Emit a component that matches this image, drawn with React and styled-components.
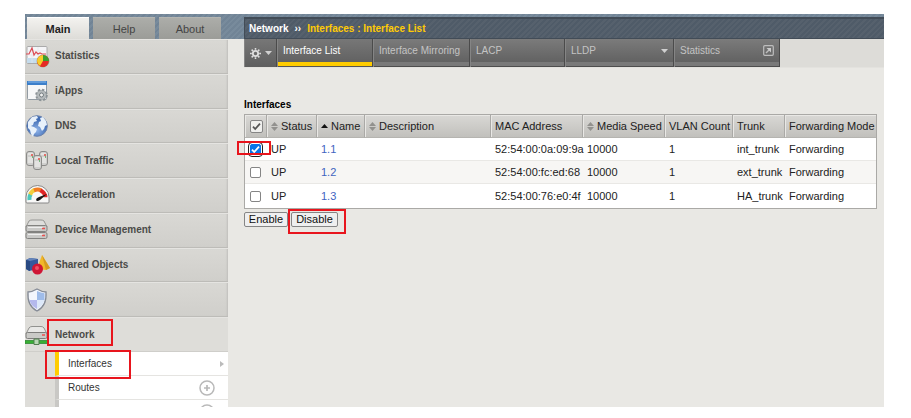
import React, { useState } from "react";
import styled, { createGlobalStyle, css } from "styled-components";

const GlobalStyle = createGlobalStyle`
  *, *::before, *::after { box-sizing: border-box; }
  body {
    margin: 0;
    background: #fff;
    color: #222;
    font: 11px/14px "Liberation Sans", Arial, sans-serif;
  }
  button, input { font: inherit; margin: 0; }
  a { color: inherit; text-decoration: none; }
  ul { list-style: none; margin: 0; padding: 0; }
`;

const callout = css`
  &::after {
    content: "";
    position: absolute;
    inset: ${(p) => p.$callout};
    border: 2px solid #e8151d;
    pointer-events: none;
    z-index: 2;
  }
`;

const Shell = styled.div`
  display: flex;
  flex-direction: column;
  height: calc(100vh - 25px);
  min-width: 800px;
  margin: 14px 27px 11px 25px;
  overflow: hidden;
  background: #e9e8e4;
`;

const Header = styled.header`
  display: flex;
  flex: none;
  height: 25px;
  padding-top: 3px;
  background: repeating-linear-gradient(135deg, #718496 0 2px, #788b9c 2px 4px);
`;

const Tabs = styled.nav`
  display: flex;
  gap: 4px;
  width: 219px;
  padding-left: 2px;
`;

const Tab = styled.button`
  width: 62px;
  padding: 0;
  border: 0;
  border-top: 1px solid ${(p) => (p.$active ? "#fff" : "#b5b6b2")};
  background: ${(p) =>
    p.$active ? "linear-gradient(#f3f2ef, #dddcd8)" : "linear-gradient(#acada9, #9b9c98)"};
  color: ${(p) => (p.$active ? "#222" : "#444")};
  font-weight: ${(p) => (p.$active ? 700 : 400)};
`;

const Breadcrumb = styled.h1`
  display: flex;
  flex: 1;
  align-items: center;
  gap: 6px;
  margin: 0;
  padding-left: 4px;
  border: 1px solid #424c57;
  border-width: 2px 0 1px 1px;
  background: repeating-linear-gradient(135deg, #4f5b68 0 2px, #56616d 2px 4px);
  color: #fff;
  font-size: 10px;
  font-weight: 700;
`;

const Trail = styled.span`
  color: #ffcb05;
`;

const Body = styled.div`
  display: flex;
  flex: 1;
  min-height: 0;
`;

const Sidebar = styled.aside`
  width: 203px;
  flex: none;
  background: #deddd9;
`;

const Menu = styled.ul`
  display: grid;
  grid-template-rows: repeat(9, 1fr);
  height: 313px;
`;

const MenuItem = styled.li`
  display: flex;
  border-bottom: 1px solid ${(p) => (p.$open ? "#cfceca" : "#bdbcb8")};
  border-top: 1px solid #e5e4e1;
  background: ${(p) => (p.$open ? "#deddd9" : "linear-gradient(#d9d8d4, #d0cfcb)")};
  box-shadow: ${(p) => (p.$open ? "none" : "inset -2px 0 2px -1px #bfbebb")};
`;

const MenuLink = styled.a`
  display: flex;
  flex: 1;
  align-items: center;
  color: #4b4b48;
  font-size: 10px;
  font-weight: 700;
  svg { flex: none; width: 26px; height: 26px; margin-right: 4px; }
`;

const MenuLabel = styled.span`
  position: relative;
  ${(p) => p.$callout && callout}
`;

const Submenu = styled.ul`
  margin-left: 30px;
`;

const SubItem = styled.li`
  position: relative;
  display: flex;
  align-items: center;
  justify-content: space-between;
  height: 24px;
  padding: 0 13px 0 9px;
  border-left: 4px solid ${(p) => (p.$active ? "#fc0" : "#c9c8c5")};
  border-bottom: 1px solid #e5e4e1;
  background: #fff;
  color: #333;
  font-size: 10px;
  ${(p) => p.$active && "padding-right: 4px;"}
  ${(p) => p.$callout && callout}
`;

const IconButton = styled.button`
  display: flex;
  padding: 0;
  border: 0;
  background: none;
`;

const Main = styled.main`
  flex: 1;
  min-width: 0;
  margin-left: 16px;
`;

const Toolbar = styled.nav`
  display: flex;
  height: 29px;
  background: #dddcd8;
  border-bottom: 1px solid #e3e2de;
`;

const ToolTab = styled.button`
  display: flex;
  justify-content: space-between;
  align-items: center;
  width: ${(p) => p.$width};
  padding: 0 5px 5px;
  border: 0;
  border-right: 1px solid #4b4b4b;
  border-left: 1px solid #858585;
  background: linear-gradient(#7b7b7b, #626262 23px, #797979 23px 27px, #4d4d4d 27px);
  color: ${(p) => (p.$active ? "#fff" : "#c4c4c4")};
  font-size: 10px;
  text-align: left;
  white-space: nowrap;
  ${(p) => p.$active && "background: linear-gradient(#777, #626262 23px, #fc0 23px 27px, #555 27px);"}
  ${(p) => p.$tools && "background: linear-gradient(#777, #5e5e5e); padding-bottom: 0; padding-right: 4px;"}
`;

const Section = styled.section`
  padding: 30px 7px 0 0;
`;

const Heading = styled.h2`
  margin: 0 0 2px;
  color: #000;
  font-size: 10px;
  line-height: 14px;
  font-weight: 700;
`;

const Table = styled.table`
  width: 100%;
  table-layout: fixed;
  border-collapse: separate;
  border-spacing: 0;
  border: 1px solid #aaa9a6;
  background: #fff;
  white-space: nowrap;
`;

const Col = styled.col`
  width: ${(p) => p.$width};
`;

const Th = styled.th`
  height: 23px;
  padding: 0 0 0 4px;
  border-bottom: 1px solid #b5b4b0;
  border-right: 1px solid #aaa9a6;
  box-shadow: inset 1px 1px #e9e8e5;
  background: linear-gradient(#d9d8d5, #c1c0bc);
  font-weight: 400;
  text-align: left;
  &:last-child { border-right: 0; }
`;

const ThInner = styled.span`
  display: flex;
  align-items: center;
  gap: 3px;
`;

const Row = styled.tr`
  background: ${(p) => (p.$shaded ? "#f7f6f4" : "#fff")};
`;

const Td = styled.td`
  position: relative;
  height: ${(p) => (p.$last ? "24px" : "23px")};
  padding: 0 0 0 4px;
  border-bottom: ${(p) => (p.$last ? "0" : "1px solid #e9e8e5")};
  ${(p) => p.$callout && callout}
  & > a { color: #3f64bf; }
`;

const Check = styled.input.attrs({ type: "checkbox" })`
  appearance: none;
  display: block;
  width: ${(p) => (p.$all ? "13px" : "11px")};
  height: ${(p) => (p.$all ? "13px" : "11px")};
  margin-left: 1px;
  border: 1px solid #858585;
  border-radius: 2px;
  background: ${(p) => (p.$all ? "#efefed" : "#fff")} center / 11px 11px no-repeat;
  &:checked {
    background-image: url("data:image/svg+xml,%3Csvg xmlns='http://www.w3.org/2000/svg' viewBox='0 0 11 11'%3E%3Cpath d='M2 5.7l2.2 2.3L9 2.7' fill='none' stroke='${(p) =>
      p.$all ? "%23555" : "white"}' stroke-width='1.8'/%3E%3C/svg%3E");
    ${(p) => !p.$all && "background-color: #0875e8; border-color: #0875e8; outline: 1px solid #222; outline-offset: 1px;"}
  }
`;

const Actions = styled.div`
  display: flex;
  gap: 3px;
  margin-top: 3px;
`;

const Action = styled.button`
  position: relative;
  width: ${(p) => p.$width};
  height: 15px;
  padding: 0;
  border: 1px solid #858585;
  border-radius: 2px;
  background: #efefef;
  color: #111;
  line-height: 13px;
  ${(p) => p.$callout && callout}
`;

const StatisticsIcon = () => (
  <svg viewBox="0 0 26 26">
    <rect x="2" y="3.500" width="20" height="17" rx="1" fill="#f5f5f7" stroke="#aaa" />
    <path d="M2 15h20v5H2z" fill="#c5dced" />
    <path d="M2 8h19M2 12h19M7 4v16M13 4v16" stroke="#e4e8ee" strokeWidth=".7" />
    <path d="M1 11h3l3-6 2 7 2-3 2 2 2-1 2 1h4" fill="none" stroke="#db4d55" strokeWidth="1.200" />
    <circle cx="18" cy="18" r="6" fill="#e52a25" stroke="#867750" strokeWidth=".5" />
    <path d="M18 18V12a6 6 0 0 0-6 6z" fill="#f6cd28" />
    <path d="M18 18h-6a6 6 0 0 0 8 5.700z" fill="#e52a25" />
    <path d="M18 18h-6a6 6 0 0 0 3 5z" fill="#f6cd28" />
    <path d="M18 18V12a6 6 0 0 1 6 6z" fill="#38a02d" />
  </svg>
);
const AppsIcon = () => (
  <svg viewBox="0 0 26 26">
    <rect x="2.500" y="3.500" width="19" height="18" rx="1" fill="#f6f7f8" stroke="#929ba3" />
    <path d="M2 3h20v4H2z" fill="#3c7fca" />
    <path d="M3 4h18" stroke="#86b8ea" />
    <circle cx="16.500" cy="17" r="5.300" fill="#a9afb2" stroke="#8b9296" strokeWidth="2" strokeDasharray="2.300 1.850" />
    <circle cx="16.500" cy="17" r="4.300" fill="#b5babc" />
    <circle cx="16.500" cy="17" r="2" fill="#eee" stroke="#747c80" />
  </svg>
);
const GlobeIcon = () => (
  <svg viewBox="0 0 26 26">
    <defs><radialGradient id="sea" cx=".5" cy=".7"><stop offset="0" stopColor="#8fb3e8" /><stop offset="1" stopColor="#416db5" /></radialGradient></defs>
    <circle cx="12" cy="13" r="10.300" fill="url(#sea)" stroke="#6b82ab" />
    <path d="M3 9l4-5 5-1 1 2-2 1 1 2-3 1-1 3-2 1 3 1 3 2-1 3-2 2-1 3-2-3-1-4-2-2zM15 5l3-1 3 4 1 4-2 1-1 3-2 2-2-4-2-1 1-4 2-1z" fill="#e8f1fb" />
  </svg>
);
const TrafficIcon = () => (
  <svg viewBox="0 0 26 26">
    {[[1, 3], [14, 3], [8, 7]].map(([x, y]) => (
      <g key={x} transform={`translate(${x} ${y})`}>
        <rect x=".5" y=".5" width="8" height="14" rx="2.500" fill="#cfcfcd" stroke="#8b8b89" />
        <path d="M2 3h5M2 7h5M2 9h5M2 11h5" stroke="#f7f7f5" />
        <path d="M5 4h2" stroke="#e24b42" strokeWidth="1.500" />
        <path d="M6 6h1" stroke="#55a95a" strokeWidth="1.500" />
      </g>
    ))}
  </svg>
);
const GaugeIcon = () => (
  <svg viewBox="0 0 26 26">
    <path d="M1 20V15A11.500 11.500 0 0 1 24 15v5q0 1-1 1H2q-1 0-1-1z" fill="#f8f8f7" stroke="#888" />
    <g fill="none" strokeWidth="4">
      <path d="M4.500 18q-.5-4 1.500-6" stroke="#4dc7bc" />
      <path d="M5 12.500q2-4 5-4.500" stroke="#f0ce3d" />
      <path d="M9 8.300q4-1.500 7 0" stroke="#f27c22" />
      <path d="M15.500 8.200q5 3 5 7" stroke="#df2425" />
    </g>
    <path d="M11 18q0-2 3-3l8-3-7 6q-3 2-4 0z" fill="#171717" />
  </svg>
);
const DeviceIcon = () => (
  <svg viewBox="0 0 26 26">
    <path d="M4 4q1-1 3-1h9q2 0 3 1l3 6H1z" fill="#dededc" stroke="#969694" />
    {[8.5, 15.5].map((y) => (
      <g key={y}>
        <rect x="1" y={y} width="21" height="6" rx="1.500" fill="#c9c9c7" stroke="#828280" />
        <path d={`M3 ${y + 2}h15`} stroke="#eee" />
        <path d={`M17 ${y + 3}h3`} stroke="#e85351" strokeWidth="1.500" />
      </g>
    ))}
  </svg>
);
const ObjectsIcon = () => (
  <svg viewBox="0 0 26 26">
    <path d="M1 8l4-2 8 1v10l-9 2-3-2z" fill="#33599d" />
    <path d="M1 8l4-2 8 1-8 2z" fill="#6685b9" />
    <path d="M1 8l4 1v10l-4-2z" fill="#294982" />
    <path d="M17 3l8 13-4 2-9-1z" fill="#f1b82a" />
    <path d="M17 3l8 13-4 2z" fill="#d69b20" />
    <circle cx="12.500" cy="17" r="5.500" fill="#cf1635" />
    <circle cx="12" cy="16" r="2" fill="#ed5165" />
  </svg>
);
const ShieldIcon = () => (
  <svg viewBox="0 0 26 26">
    <path d="M12 2q5 3 9 3 1 14-9 19Q2 19 3 5q4 0 9-3z" fill="#f3f6fc" stroke="#858b96" strokeWidth="1.300" />
    <path d="M12 4q4 2 7.500 2.300V13H12z" fill="#9fbce9" />
    <path d="M4.500 13H12v9Q5 18 4.500 13z" fill="#b4b9ed" />
    <path d="M12 13h7.500Q18 19 12 22z" fill="#dce8f9" />
  </svg>
);
const NetworkIcon = () => (
  <svg viewBox="0 0 26 26">
    <path d="M4 6q1-1.500 3-1.500h9q2 0 3 1.500l3 6H1z" fill="#e8e8e6" stroke="#92928f" />
    <rect x="1" y="10.500" width="21" height="6" rx="1.500" fill="#cacac7" stroke="#7e7e7c" />
    <path d="M17 13h3" stroke="#e85351" strokeWidth="1.500" />
    <path d="M0 18.500h23v3H0z" fill="#38af35" stroke="#27802a" strokeWidth=".7" />
    <path d="M9 17h5v5.500H9z" fill="#b8d8b4" stroke="#537c50" />
  </svg>
);
const PlusIcon = () => (
  <svg width="16" height="16" viewBox="0 0 16 16" fill="none" stroke="#b9b9b9">
    <circle cx="8" cy="8" r="7" strokeWidth="1.500" />
    <path d="M5 8h6M8 5v6" strokeWidth="1.700" />
  </svg>
);
const ArrowIcon = () => (
  <svg width="4" height="8" viewBox="0 0 4 8"><path d="M0 1l4 3-4 3z" fill="#bbb" /></svg>
);
const Caret = () => (
  <svg width="7" height="4" viewBox="0 0 7 4"><path d="M0 0h7L3.500 4z" fill="#d0d0d0" /></svg>
);
const GearIcon = () => (
  <svg width="11" height="11" viewBox="0 0 12 12" stroke="#ddd" fill="none">
    <circle cx="6" cy="6" r="2.900" strokeWidth="2" />
    <path d="M6 0v2M6 10v2M0 6h2M10 6h2M1.800 1.800l1.400 1.400M8.800 8.800l1.400 1.400M10.200 1.800L8.800 3.200M3.200 8.800l-1.400 1.400" strokeWidth="1.700" />
  </svg>
);
const PopoutIcon = () => (
  <svg width="11" height="11" viewBox="0 0 11 11" stroke="#bdbdbd" fill="none">
    <rect x=".7" y=".7" width="9.600" height="9.600" rx="1" strokeWidth="1.200" />
    <path d="M3 8l3-3" strokeWidth="1.500" /><path d="M3.500 3H8v4.500z" fill="#ccc" stroke="none" />
  </svg>
);
const SortIcon = ({ sorted }) => (
  <svg width="7" height="9" viewBox="0 0 7 9">
    {sorted ? <path d="M0 6l3.500-4L7 6z" fill="#111" /> : <path d="M0 4l3.500-4L7 4zM0 5h7L3.500 9z" fill="#92918e" />}
  </svg>
);

const MENU = [
  ["Statistics", StatisticsIcon],
  ["iApps", AppsIcon],
  ["DNS", GlobeIcon],
  ["Local Traffic", TrafficIcon],
  ["Acceleration", GaugeIcon],
  ["Device Management", DeviceIcon],
  ["Shared Objects", ObjectsIcon],
  ["Security", ShieldIcon],
  ["Network", NetworkIcon],
];

const COLUMNS = [
  ["Status", "50px", "none"],
  ["Name", "48px", "asc"],
  ["Description", "auto", "none"],
  ["MAC Address", "92px"],
  ["Media Speed", "82px", "none"],
  ["VLAN Count", "68px"],
  ["Trunk", "52px"],
  ["Forwarding Mode", "91px"],
];

const INTERFACES = [
  ["1.1", "52:54:00:0a:09:9a", "int_trunk"],
  ["1.2", "52:54:00:fc:ed:68", "ext_trunk"],
  ["1.3", "52:54:00:76:e0:4f", "HA_trunk"],
];

export default function App() {
  const [selected, setSelected] = useState({ "1.1": true });
  const [all, setAll] = useState(true);
  return (
    <>
      <GlobalStyle />
      <Shell>
        <Header>
          <Tabs>
            <Tab $active>Main</Tab>
            <Tab>Help</Tab>
            <Tab>About</Tab>
          </Tabs>
          <Breadcrumb>
            <span>Network</span>
            <span>››</span>
            <Trail>Interfaces : Interface List</Trail>
          </Breadcrumb>
        </Header>
        <Body>
          <Sidebar>
            <Menu>
              {MENU.map(([label, Icon]) => (
                <MenuItem key={label} $open={label === "Network"}>
                  <MenuLink href="#">
                    <Icon />
                    <MenuLabel $callout={label === "Network" && "-9px -19px -4px -8px"}>{label}</MenuLabel>
                  </MenuLink>
                </MenuItem>
              ))}
            </Menu>
            <Submenu>
              <SubItem $active $callout="-2px 97px -4px -14px">
                <a href="#">Interfaces</a>
                <ArrowIcon />
              </SubItem>
              <SubItem>
                <a href="#">Routes</a>
                <IconButton aria-label="Create route"><PlusIcon /></IconButton>
              </SubItem>
              <SubItem>
                <span />
                <IconButton aria-label="Create"><PlusIcon /></IconButton>
              </SubItem>
            </Submenu>
          </Sidebar>
          <Main>
            <Toolbar>
              <ToolTab $width="33px" $tools aria-label="Options"><GearIcon /><Caret /></ToolTab>
              <ToolTab $width="96px" $active>Interface List</ToolTab>
              <ToolTab $width="97px">Interface Mirroring</ToolTab>
              <ToolTab $width="95px">LACP</ToolTab>
              <ToolTab $width="109px">LLDP<Caret /></ToolTab>
              <ToolTab $width="106px">Statistics<PopoutIcon /></ToolTab>
            </Toolbar>
            <Section>
              <Heading>Interfaces</Heading>
              <Table>
                <colgroup>
                  <Col $width="22px" />
                  {COLUMNS.map(([name, width]) => <Col key={name} $width={width} />)}
                </colgroup>
                <thead>
                  <tr>
                    <Th>
                      <Check $all aria-label="Select all" checked={all} onChange={() => setAll(!all)} />
                    </Th>
                    {COLUMNS.map(([name, , sort]) => (
                      <Th key={name}>
                        <ThInner>
                          {sort && <SortIcon sorted={sort === "asc"} />}
                          {name}
                        </ThInner>
                      </Th>
                    ))}
                  </tr>
                </thead>
                <tbody>
                  {INTERFACES.map(([name, mac, trunk], i) => {
                    const last = i === INTERFACES.length - 1;
                    return (
                      <Row key={name} $shaded={i === 1}>
                        <Td $last={last} $callout={i === 0 && "3px -4px 5px -8px"}>
                          <Check
                            aria-label={`Select ${name}`}
                            checked={!!selected[name]}
                            onChange={() => setSelected({ ...selected, [name]: !selected[name] })}
                          />
                        </Td>
                        <Td $last={last}>UP</Td>
                        <Td $last={last}><a href="#">{name}</a></Td>
                        <Td $last={last} />
                        <Td $last={last}>{mac}</Td>
                        <Td $last={last}>10000</Td>
                        <Td $last={last}>1</Td>
                        <Td $last={last}>{trunk}</Td>
                        <Td $last={last}>Forwarding</Td>
                      </Row>
                    );
                  })}
                </tbody>
              </Table>
              <Actions>
                <Action $width="44px">Enable</Action>
                <Action $width="47px" $callout="-4px -9px -8px -4px">Disable</Action>
              </Actions>
            </Section>
          </Main>
        </Body>
      </Shell>
    </>
  );
}
